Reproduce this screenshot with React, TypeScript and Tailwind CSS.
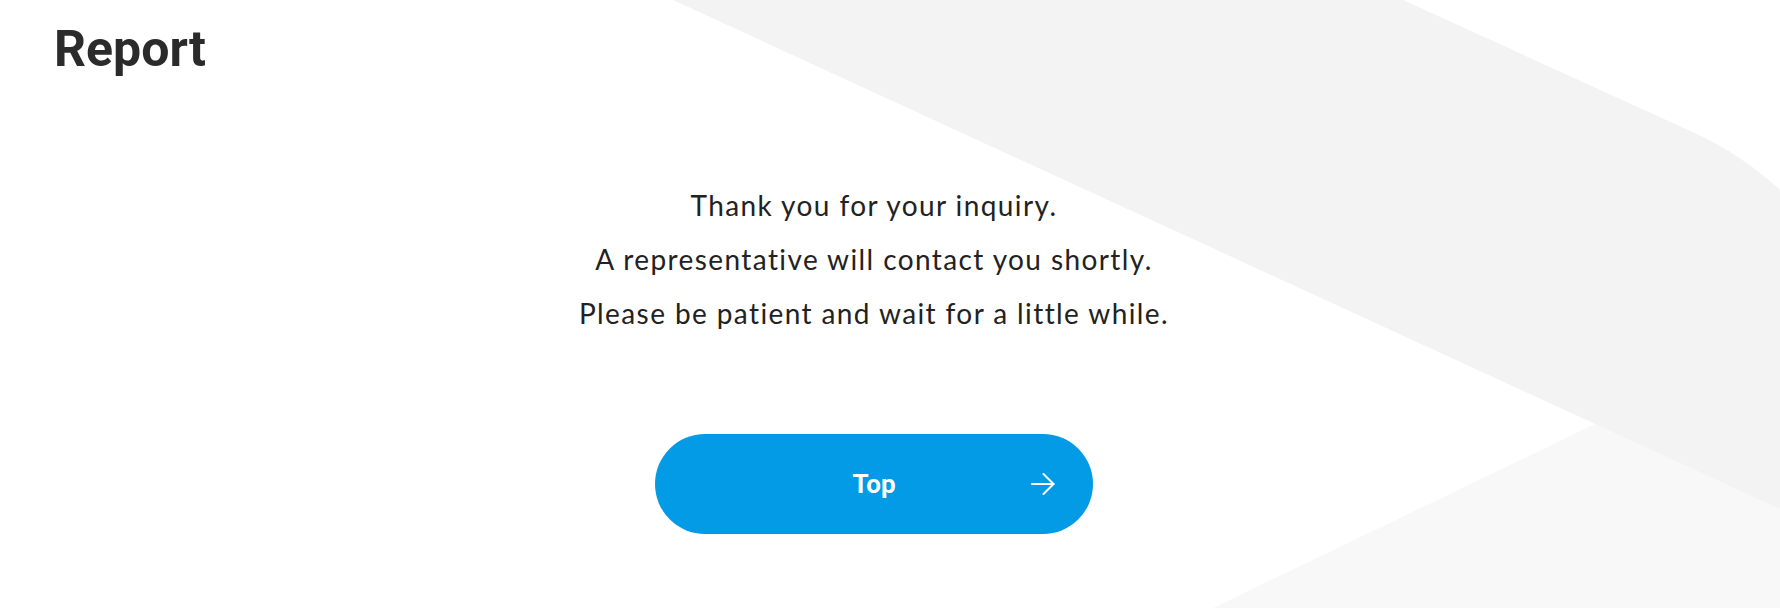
import React from "react";

function Backdrop() {
  return (
    <svg
      className="absolute top-0 left-0 pointer-events-none"
      width="1780"
      height="608"
      viewBox="0 0 1780 608"
      aria-hidden="true"
    >
      <path d="M1213 608 L1780 335 L1780 608 Z" fill="#f8f8f8" />
      <path d="M673 0 L1403 0 L1697 134 Q1742 155 1780 190 L1780 509 Z" fill="#f3f3f3" />
    </svg>
  );
}

function ArrowIcon() {
  return (
    <svg width="24" height="22" viewBox="0 0 24 22" fill="none" stroke="white" strokeWidth="2" strokeLinecap="round" strokeLinejoin="round">
      <path d="M1 11 H22.5" />
      <path d="M12.5 1 L22.5 11 L12.5 21" />
    </svg>
  );
}

export default function App() {
  return (
    <div className="relative h-[608px] w-full overflow-hidden bg-white">
      <Backdrop />
      <div className="relative flex flex-col">
        <h1 className="pl-[54px] pt-6 text-[50px] leading-none font-bold text-[#2b2b2b] font-['Roboto',sans-serif]">
          Report
        </h1>

        <div className="flex flex-col items-center pr-8">
          <div className="mt-[104px] text-center text-[28px] leading-[54px] tracking-[0.05em] text-[#222222] font-['Lato',sans-serif]">
            <p>Thank you for your inquiry.</p>
            <p>A representative will contact you shortly.</p>
            <p>Please be patient and wait for a little while.</p>
          </div>

          <button className="relative mt-[94px] flex h-[100px] w-[438px] items-center justify-center rounded-full bg-[#039be5] text-white">
            <span className="text-[26px] font-bold font-['Roboto',sans-serif]">Top</span>
            <span className="absolute right-[38px] top-1/2 -translate-y-1/2 flex">
              <ArrowIcon />
            </span>
          </button>
        </div>
      </div>
    </div>
  );
}
